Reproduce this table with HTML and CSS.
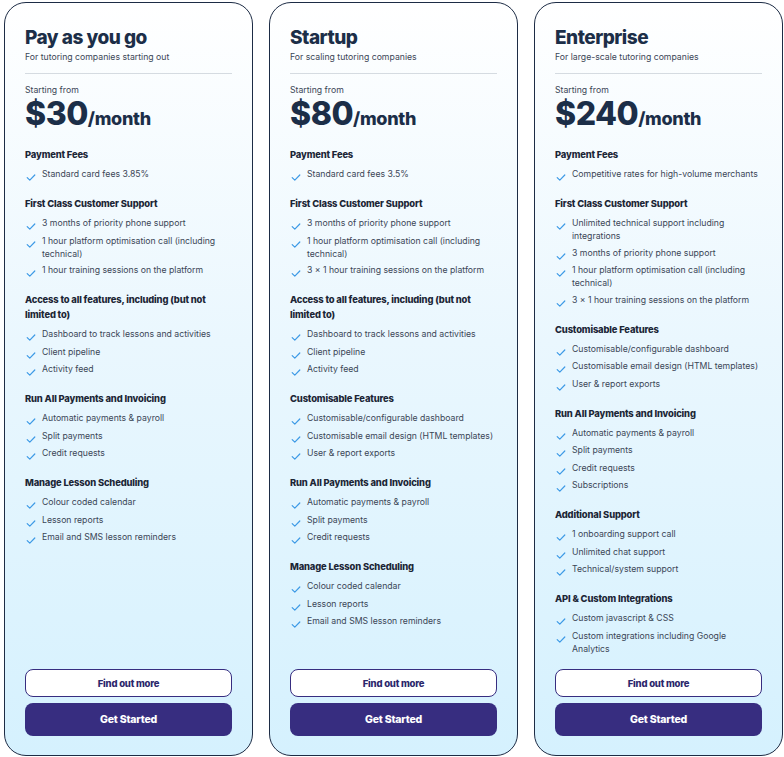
FILE: index.html
```html
<!DOCTYPE html>
<html lang="en">
<head>
<meta charset="utf-8">
<title>Pricing</title>
<link rel="stylesheet" href="styles.css">
</head>
<body>
<svg width="0" height="0" style="position:absolute">
  <defs>
    <symbol id="chk" viewBox="0 0 10 10"><path d="M1.2 5.6 L3.8 8.2 L8.8 3" fill="none" stroke="#3d9ae6" stroke-width="1.2" stroke-linecap="round" stroke-linejoin="round"/></symbol>
  </defs>
</svg>
<main class="plans">
  <section class="card">
    <h2 class="title">Pay as you go</h2>
    <p class="sub">For tutoring companies starting out</p>
    <hr class="divider">
    <p class="from">Starting from</p>
    <p class="price"><span class="amount">$30</span><span class="per">/month</span></p>
    <div class="group">
      <h3>Payment Fees</h3>
      <ul>
        <li><svg class="ic"><use href="#chk"/></svg><span>Standard card fees 3.85%</span></li>
      </ul>
    </div>
    <div class="group">
      <h3>First Class Customer Support</h3>
      <ul>
        <li><svg class="ic"><use href="#chk"/></svg><span>3 months of priority phone support</span></li>
        <li><svg class="ic"><use href="#chk"/></svg><span>1 hour platform optimisation call (including technical)</span></li>
        <li><svg class="ic"><use href="#chk"/></svg><span>1 hour training sessions on the platform</span></li>
      </ul>
    </div>
    <div class="group">
      <h3>Access to all features, including (but not limited to)</h3>
      <ul>
        <li><svg class="ic"><use href="#chk"/></svg><span>Dashboard to track lessons and activities</span></li>
        <li><svg class="ic"><use href="#chk"/></svg><span>Client pipeline</span></li>
        <li><svg class="ic"><use href="#chk"/></svg><span>Activity feed</span></li>
      </ul>
    </div>
    <div class="group">
      <h3>Run All Payments and Invoicing</h3>
      <ul>
        <li><svg class="ic"><use href="#chk"/></svg><span>Automatic payments &amp; payroll</span></li>
        <li><svg class="ic"><use href="#chk"/></svg><span>Split payments</span></li>
        <li><svg class="ic"><use href="#chk"/></svg><span>Credit requests</span></li>
      </ul>
    </div>
    <div class="group">
      <h3>Manage Lesson Scheduling</h3>
      <ul>
        <li><svg class="ic"><use href="#chk"/></svg><span>Colour coded calendar</span></li>
        <li><svg class="ic"><use href="#chk"/></svg><span>Lesson reports</span></li>
        <li><svg class="ic"><use href="#chk"/></svg><span>Email and SMS lesson reminders</span></li>
      </ul>
    </div>
    <div class="actions">
      <button class="btn btn-outline">Find out more</button>
      <button class="btn btn-solid">Get Started</button>
    </div>
  </section>

  <section class="card">
    <h2 class="title">Startup</h2>
    <p class="sub">For scaling tutoring companies</p>
    <hr class="divider">
    <p class="from">Starting from</p>
    <p class="price"><span class="amount">$80</span><span class="per">/month</span></p>
    <div class="group">
      <h3>Payment Fees</h3>
      <ul>
        <li><svg class="ic"><use href="#chk"/></svg><span>Standard card fees 3.5%</span></li>
      </ul>
    </div>
    <div class="group">
      <h3>First Class Customer Support</h3>
      <ul>
        <li><svg class="ic"><use href="#chk"/></svg><span>3 months of priority phone support</span></li>
        <li><svg class="ic"><use href="#chk"/></svg><span>1 hour platform optimisation call (including technical)</span></li>
        <li><svg class="ic"><use href="#chk"/></svg><span>3 × 1 hour training sessions on the platform</span></li>
      </ul>
    </div>
    <div class="group">
      <h3>Access to all features, including (but not limited to)</h3>
      <ul>
        <li><svg class="ic"><use href="#chk"/></svg><span>Dashboard to track lessons and activities</span></li>
        <li><svg class="ic"><use href="#chk"/></svg><span>Client pipeline</span></li>
        <li><svg class="ic"><use href="#chk"/></svg><span>Activity feed</span></li>
      </ul>
    </div>
    <div class="group">
      <h3>Customisable Features</h3>
      <ul>
        <li><svg class="ic"><use href="#chk"/></svg><span>Customisable/configurable dashboard</span></li>
        <li><svg class="ic"><use href="#chk"/></svg><span>Customisable email design (HTML templates)</span></li>
        <li><svg class="ic"><use href="#chk"/></svg><span>User &amp; report exports</span></li>
      </ul>
    </div>
    <div class="group">
      <h3>Run All Payments and Invoicing</h3>
      <ul>
        <li><svg class="ic"><use href="#chk"/></svg><span>Automatic payments &amp; payroll</span></li>
        <li><svg class="ic"><use href="#chk"/></svg><span>Split payments</span></li>
        <li><svg class="ic"><use href="#chk"/></svg><span>Credit requests</span></li>
      </ul>
    </div>
    <div class="group">
      <h3>Manage Lesson Scheduling</h3>
      <ul>
        <li><svg class="ic"><use href="#chk"/></svg><span>Colour coded calendar</span></li>
        <li><svg class="ic"><use href="#chk"/></svg><span>Lesson reports</span></li>
        <li><svg class="ic"><use href="#chk"/></svg><span>Email and SMS lesson reminders</span></li>
      </ul>
    </div>
    <div class="actions">
      <button class="btn btn-outline">Find out more</button>
      <button class="btn btn-solid">Get Started</button>
    </div>
  </section>

  <section class="card">
    <h2 class="title">Enterprise</h2>
    <p class="sub">For large-scale tutoring companies</p>
    <hr class="divider">
    <p class="from">Starting from</p>
    <p class="price"><span class="amount">$240</span><span class="per">/month</span></p>
    <div class="group">
      <h3>Payment Fees</h3>
      <ul>
        <li><svg class="ic"><use href="#chk"/></svg><span>Competitive rates for high-volume merchants</span></li>
      </ul>
    </div>
    <div class="group">
      <h3>First Class Customer Support</h3>
      <ul>
        <li><svg class="ic"><use href="#chk"/></svg><span>Unlimited technical support including integrations</span></li>
        <li><svg class="ic"><use href="#chk"/></svg><span>3 months of priority phone support</span></li>
        <li><svg class="ic"><use href="#chk"/></svg><span>1 hour platform optimisation call (including technical)</span></li>
        <li><svg class="ic"><use href="#chk"/></svg><span>3 × 1 hour training sessions on the platform</span></li>
      </ul>
    </div>
    <div class="group">
      <h3>Customisable Features</h3>
      <ul>
        <li><svg class="ic"><use href="#chk"/></svg><span>Customisable/configurable dashboard</span></li>
        <li><svg class="ic"><use href="#chk"/></svg><span>Customisable email design (HTML templates)</span></li>
        <li><svg class="ic"><use href="#chk"/></svg><span>User &amp; report exports</span></li>
      </ul>
    </div>
    <div class="group">
      <h3>Run All Payments and Invoicing</h3>
      <ul>
        <li><svg class="ic"><use href="#chk"/></svg><span>Automatic payments &amp; payroll</span></li>
        <li><svg class="ic"><use href="#chk"/></svg><span>Split payments</span></li>
        <li><svg class="ic"><use href="#chk"/></svg><span>Credit requests</span></li>
        <li><svg class="ic"><use href="#chk"/></svg><span>Subscriptions</span></li>
      </ul>
    </div>
    <div class="group">
      <h3>Additional Support</h3>
      <ul>
        <li><svg class="ic"><use href="#chk"/></svg><span>1 onboarding support call</span></li>
        <li><svg class="ic"><use href="#chk"/></svg><span>Unlimited chat support</span></li>
        <li><svg class="ic"><use href="#chk"/></svg><span>Technical/system support</span></li>
      </ul>
    </div>
    <div class="group">
      <h3>API &amp; Custom Integrations</h3>
      <ul>
        <li><svg class="ic"><use href="#chk"/></svg><span>Custom javascript &amp; CSS</span></li>
        <li><svg class="ic"><use href="#chk"/></svg><span>Custom integrations including Google Analytics</span></li>
      </ul>
    </div>
    <div class="actions">
      <button class="btn btn-outline">Find out more</button>
      <button class="btn btn-solid">Get Started</button>
    </div>
  </section>
</main>
</body>
</html>
```

FILE: styles.css
```css
* { box-sizing: border-box; }
html, body { margin: 0; padding: 0; background: #ffffff; }
body {
  font-family: Inter, "Noto Sans", sans-serif;
  color: #3b4656;
}
.plans {
  display: grid;
  grid-template-columns: repeat(3, 1fr);
  gap: 16px;
  padding: 2px 1px 1px 4px;
  height: 757px;
}
.card {
  display: flex;
  flex-direction: column;
  border: 1.2px solid #1d2c45;
  border-radius: 22px;
  padding: 22px 20px 19px 20px;
  background: linear-gradient(180deg, #ffffff 0%, #eaf7fe 45%, #d5f1fe 100%);
}
.title {
  margin: 0;
  font-size: 19px;
  line-height: 26px;
  font-weight: 800;
  letter-spacing: -0.5px;
  color: #1c2e48;
}
.sub {
  margin: 0;
  font-size: 8.7px;
  line-height: 13px;
  color: #3b4656;
}
.divider {
  border: 0;
  border-top: 1px solid #d5dbe1;
  margin: 9px 0 0;
}
.from {
  margin: 10px 0 0;
  font-size: 8.7px;
  line-height: 13px;
}
.price {
  margin: 0;
  color: #1c2e48;
  font-weight: 800;
  line-height: 34px;
  white-space: nowrap;
}
.amount { font-size: 32px; letter-spacing: -0.5px; }
.per { font-size: 18px; letter-spacing: -0.3px; }
.group { margin-top: 11px; }
.group + .group { margin-top: 14px; }
.group h3 {
  margin: 0 0 6px;
  font-size: 9.4px;
  line-height: 15px;
  font-weight: 800;
  color: #1c2636;
  letter-spacing: -0.15px;
}
.group ul {
  list-style: none;
  margin: 0;
  padding: 0;
  display: flex;
  flex-direction: column;
  gap: 3.5px;
}
.group li {
  display: flex;
  gap: 6px;
  font-size: 8.7px;
  line-height: 13px;
  color: #3b4656;
}
.ic {
  flex: none;
  width: 10px;
  height: 10px;
  margin-top: 4px;
  margin-left: 1px;
}
.actions {
  margin-top: auto;
  display: flex;
  flex-direction: column;
  gap: 6px;
}
.btn {
  font-family: Inter, "Noto Sans", sans-serif;
  font-weight: 800;
  letter-spacing: -0.2px;
  border-radius: 8px;
  cursor: pointer;
}
.btn-outline {
  height: 28px;
  font-size: 9.5px;
  background: #ffffff;
  border: 1px solid #372d80;
  color: #2b276b;
}
.btn-solid {
  height: 33px;
  font-size: 10.5px;
  background: #372d80;
  border: 0;
  color: #ffffff;
}
```
